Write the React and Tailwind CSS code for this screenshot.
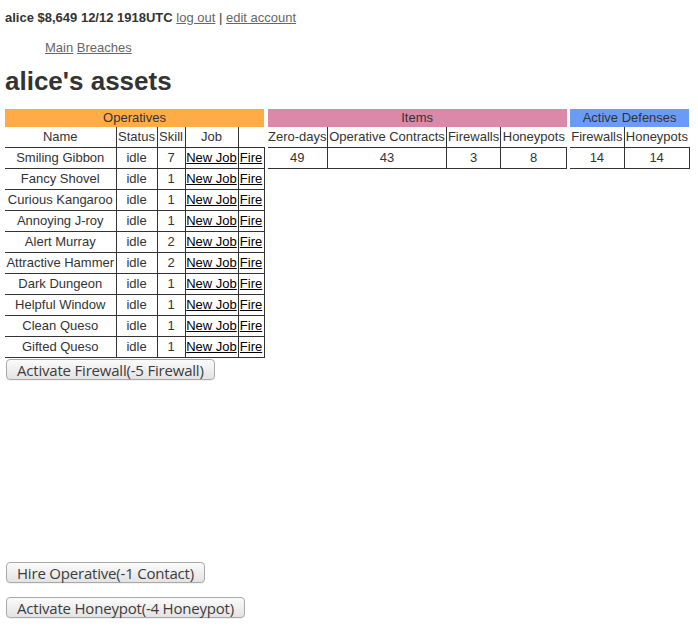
import React from "react";

const operatives = [
  ["Smiling Gibbon", "7"],
  ["Fancy Shovel", "1"],
  ["Curious Kangaroo", "1"],
  ["Annoying J-roy", "1"],
  ["Alert Murray", "2"],
  ["Attractive Hammer", "2"],
  ["Dark Dungeon", "1"],
  ["Helpful Window", "1"],
  ["Clean Queso", "1"],
  ["Gifted Queso", "1"],
];

const th = "font-normal leading-[16px] py-[2px] px-0 border-b border-[#333] text-center whitespace-nowrap";
const thR = th + " border-r";
const td = "leading-[16px] py-[2px] px-0 border-b border-r border-[#333] text-center whitespace-nowrap";
const titleCell = "font-normal leading-[16px] py-[1px] text-center";

function Btn({ children }) {
  return (
    <button className="block h-[21px] px-[10px] rounded-[4px] border border-[#a9a9a9] bg-gradient-to-b from-[#fbfbfb] to-[#e3e3e3] text-[#3c3c3c] text-[15px] leading-[18px] shadow-[0_1px_0_rgba(0,0,0,0.05)] [font-family:'Open_Sans','Liberation_Sans',sans-serif] tracking-[-0.2px]">
      {children}
    </button>
  );
}

export default function App() {
  return (
    <div className="min-h-[632px] bg-white px-[5px] pt-[10px] text-[#333] text-[13px] [font-family:'Liberation_Sans',Arial,sans-serif]">
      <div className="leading-[15px]">
        <b>alice $8,649 12/12 1918UTC</b>{" "}
        <a href="#" className="underline text-[#666]">log out</a> |{" "}
        <a href="#" className="underline text-[#666]">edit account</a>
      </div>
      <ul className="mt-[15px] pl-[40px] leading-[15px]">
        <li className="inline"><a href="#" className="underline text-[#666]">Main</a></li>{" "}
        <li className="inline"><a href="#" className="underline text-[#666]">Breaches</a></li>
      </ul>
      <h1 className="mt-[11px] text-[26px] font-bold leading-[30px] text-[#333]">alice's assets</h1>
      <div className="mt-[13px] flex items-start gap-[3px]">
        <table className="border-collapse table-fixed w-[259px]">
          <colgroup>
            <col className="w-[111px]" />
            <col className="w-[41px]" />
            <col className="w-[28px]" />
            <col className="w-[53px]" />
            <col className="w-[26px]" />
          </colgroup>
          <thead>
            <tr>
              <th colSpan={5} className={titleCell + " bg-[#ffac46]"}>Operatives</th>
            </tr>
            <tr>
              <th className={thR}>Name</th>
              <th className={thR}>Status</th>
              <th className={thR}>Skill</th>
              <th className={thR}>Job</th>
              <th className={th}></th>
            </tr>
          </thead>
          <tbody>
            {operatives.map(([name, skill]) => (
              <tr key={name}>
                <td className={td}>{name}</td>
                <td className={td}>idle</td>
                <td className={td}>{skill}</td>
                <td className={td}><a href="#" className="underline text-black">New Job</a></td>
                <td className={td}><a href="#" className="underline text-black">Fire</a></td>
              </tr>
            ))}
          </tbody>
        </table>
        <table className="border-collapse table-fixed w-[299px]">
          <colgroup>
            <col className="w-[60px]" />
            <col className="w-[119px]" />
            <col className="w-[54px]" />
            <col className="w-[66px]" />
          </colgroup>
          <thead>
            <tr>
              <th colSpan={4} className={titleCell + " bg-[#db88a9]"}>Items</th>
            </tr>
            <tr>
              <th className={thR}>Zero-days</th>
              <th className={thR}>Operative Contracts</th>
              <th className={thR}>Firewalls</th>
              <th className={th}>Honeypots</th>
            </tr>
          </thead>
          <tbody>
            <tr>
              <td className={td}>49</td>
              <td className={td}>43</td>
              <td className={td}>3</td>
              <td className={td}>8</td>
            </tr>
          </tbody>
        </table>
        <table className="border-collapse table-fixed w-[119px]">
          <colgroup>
            <col className="w-[54px]" />
            <col className="w-[65px]" />
          </colgroup>
          <thead>
            <tr>
              <th colSpan={2} className={titleCell + " bg-[#6a9cf6]"}>Active Defenses</th>
            </tr>
            <tr>
              <th className={thR}>Firewalls</th>
              <th className={th}>Honeypots</th>
            </tr>
          </thead>
          <tbody>
            <tr>
              <td className={td}>14</td>
              <td className={td}>14</td>
            </tr>
          </tbody>
        </table>
      </div>
      <div className="mt-[1px] pl-[1px]">
        <Btn>Activate Firewall(-5 Firewall)</Btn>
      </div>
      <div className="mt-[182px] pl-[1px]">
        <Btn>Hire Operative(-1 Contact)</Btn>
      </div>
      <div className="mt-[14px] pl-[1px]">
        <Btn>Activate Honeypot(-4 Honeypot)</Btn>
      </div>
    </div>
  );
}
